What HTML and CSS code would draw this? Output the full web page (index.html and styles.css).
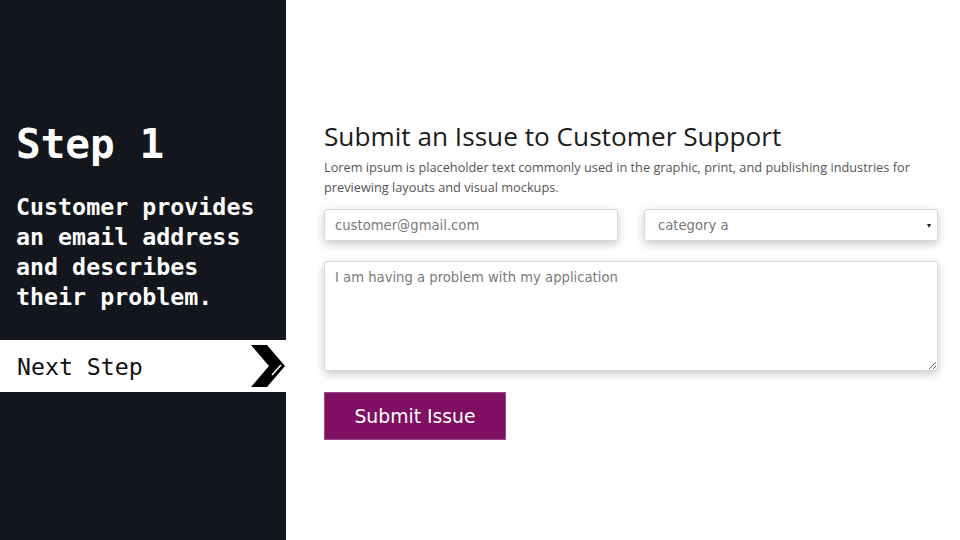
FILE: index.html
```html
<!DOCTYPE html>
<html lang="en">
<head>
<meta charset="utf-8">
<title>Step 1</title>
<link rel="stylesheet" href="styles.css">
</head>
<body>
<div class="page">
  <aside class="side">
    <h1 class="step-title">Step 1</h1>
    <p class="step-desc">Customer provides an email address and describes their problem.</p>
    <div class="next">
      <span class="next-label">Next Step</span>
      <svg class="chev" width="36" height="44" viewBox="0 0 36 44">
        <polygon points="1,1 17,1 35,22 17,43 1,43 19,22" fill="#000"/>
        <line x1="22" y1="31" x2="31" y2="21" stroke="#fff" stroke-width="1.5"/>
      </svg>
    </div>
  </aside>
  <main class="main">
    <form class="form">
      <h2 class="form-title">Submit an Issue to Customer Support</h2>
      <p class="form-text">Lorem ipsum is placeholder text commonly used in the graphic, print, and publishing industries for previewing layouts and visual mockups.</p>
      <div class="row">
        <input class="field" type="email" placeholder="customer@gmail.com">
        <div class="select">
          <span>category a</span>
          <span class="caret">&#9662;</span>
        </div>
      </div>
      <textarea class="area" placeholder="I am having a problem with my application"></textarea>
      <button class="btn" type="button">Submit Issue</button>
    </form>
  </main>
</div>
</body>
</html>
```

FILE: styles.css
```css
* { box-sizing: border-box; }
html, body { margin: 0; padding: 0; }
body { width: 960px; height: 540px; overflow: hidden; background: #fff; }
.page { display: flex; height: 540px; }
.side {
  width: 286px;
  background: #13161d;
  color: #fff;
  font-family: "DejaVu Sans Mono", monospace;
  padding-top: 119px;
  display: flex;
  flex-direction: column;
}
.step-title {
  margin: 0 0 0 16px;
  font-size: 41px;
  line-height: 50px;
  font-weight: bold;
}
.step-desc {
  margin: 23px 0 0 16px;
  font-size: 23.3px;
  line-height: 30px;
  font-weight: bold;
  width: 260px;
}
.next {
  margin-top: 28px;
  height: 52px;
  background: #fff;
  color: #111;
  display: flex;
  align-items: center;
  justify-content: space-between;
  padding-left: 17px;
}
.next-label { font-size: 23.2px; }
.chev { display: block; margin-right: 0; }
.main { flex: 1; padding: 118px 0 0 38px; }
.form { width: 614px; display: flex; flex-direction: column; }
.form-title {
  margin: 0;
  font-family: "Open Sans", sans-serif;
  font-weight: normal;
  font-size: 26.2px;
  line-height: 36px;
  color: #1c1c1c;
}
.form-text {
  margin: 3px 0 0;
  font-family: "Open Sans", sans-serif;
  font-size: 12.75px;
  line-height: 20px;
  color: #555;
}
.row { display: flex; gap: 26px; margin-top: 12px; }
.field, .select, .area {
  border: 1px solid #d4d7dd;
  border-radius: 3px;
  background: #fff;
  box-shadow: 0 3px 10px rgba(0,0,0,0.22);
  font-family: "DejaVu Sans", sans-serif;
  font-size: 13.2px;
  color: #777;
}
.field { width: 294px; height: 32px; padding: 0 10px; outline: none; }
.field::placeholder, .area::placeholder { color: #7a7a7a; }
.select {
  width: 294px; height: 32px;
  display: flex; align-items: center; justify-content: space-between;
  padding: 0 6px 0 13px;
}
.caret { font-size: 8px; color: #222; }
.area {
  margin-top: 20px;
  height: 110px;
  resize: vertical;
  padding: 8px 10px;
  outline: none;
}
.btn {
  margin-top: 21px;
  width: 182px; height: 48px;
  background: #7e0f62;
  border: 1px solid #9a4a86;
  color: #fff;
  font-family: "DejaVu Sans", sans-serif;
  font-size: 18.8px;
  align-self: flex-start;
}
```
